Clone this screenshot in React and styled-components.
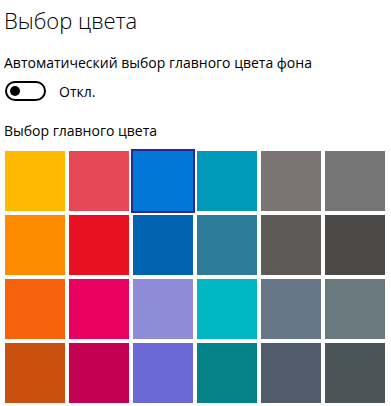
import React, { useState } from 'react';
import styled, { createGlobalStyle } from 'styled-components';

const rows = [
  ['#FFB900', '#E74856', '#0078D7', '#0099BC', '#7A7574', '#767676'],
  ['#FF8C00', '#E81123', '#0063B1', '#2D7D9A', '#5D5A58', '#4C4A48'],
  ['#F7630C', '#EA005E', '#8E8CD8', '#00B7C3', '#68768A', '#69797E'],
  ['#CA5010', '#C30052', '#6B69D6', '#038387', '#515C6B', '#4A5459'],
];

const GlobalStyle = createGlobalStyle`
  html, body {
    margin: 0;
    background: #ffffff;
  }
  body {
    font-family: "Open Sans", "Noto Sans", sans-serif;
    color: #000000;
  }
`;

const Page = styled.div`
  padding: 5px 0 0 4px;
`;

const Title = styled.h1`
  margin: 0;
  font-size: 22px;
  font-weight: 300;
  line-height: 30px;
`;

const Label = styled.div`
  margin-top: ${(p) => p.$top}px;
  font-size: 14px;
  line-height: 20px;
`;

const ToggleRow = styled.div`
  display: flex;
  align-items: center;
  gap: 13px;
  margin-top: 8px;
  padding-left: 1px;
  font-size: 14px;
`;

const Track = styled.button`
  width: 41px;
  height: 20px;
  box-sizing: border-box;
  border: 2px solid #000000;
  border-radius: 10px;
  background: #ffffff;
  padding: 0 0 0 3px;
  display: flex;
  align-items: center;
  cursor: pointer;
`;

const Knob = styled.span`
  width: 10px;
  height: 10px;
  border-radius: 50%;
  background: #000000;
`;

const Grid = styled.div`
  display: grid;
  grid-template-columns: repeat(6, 60px);
  grid-auto-rows: 60px;
  gap: 4px;
  margin-top: 10px;
  padding-left: 1px;
`;

const Swatch = styled.div`
  background: ${(p) => p.$color};
  outline: ${(p) => (p.$selected ? '2px solid #2B2A8C' : 'none')};
  cursor: pointer;
`;

export default function App() {
  const [selected, setSelected] = useState('#0078D7');
  return (
    <>
      <GlobalStyle />
      <Page>
        <Title>Выбор цвета</Title>
        <Label $top={18}>Автоматический выбор главного цвета фона</Label>
        <ToggleRow>
          <Track aria-label="Автоматический выбор">
            <Knob />
          </Track>
          <span>Откл.</span>
        </ToggleRow>
        <Label $top={20}>Выбор главного цвета</Label>
        <Grid>
          {rows.flat().map((c) => (
            <Swatch key={c} $color={c} $selected={c === selected} onClick={() => setSelected(c)} />
          ))}
        </Grid>
      </Page>
    </>
  );
}
